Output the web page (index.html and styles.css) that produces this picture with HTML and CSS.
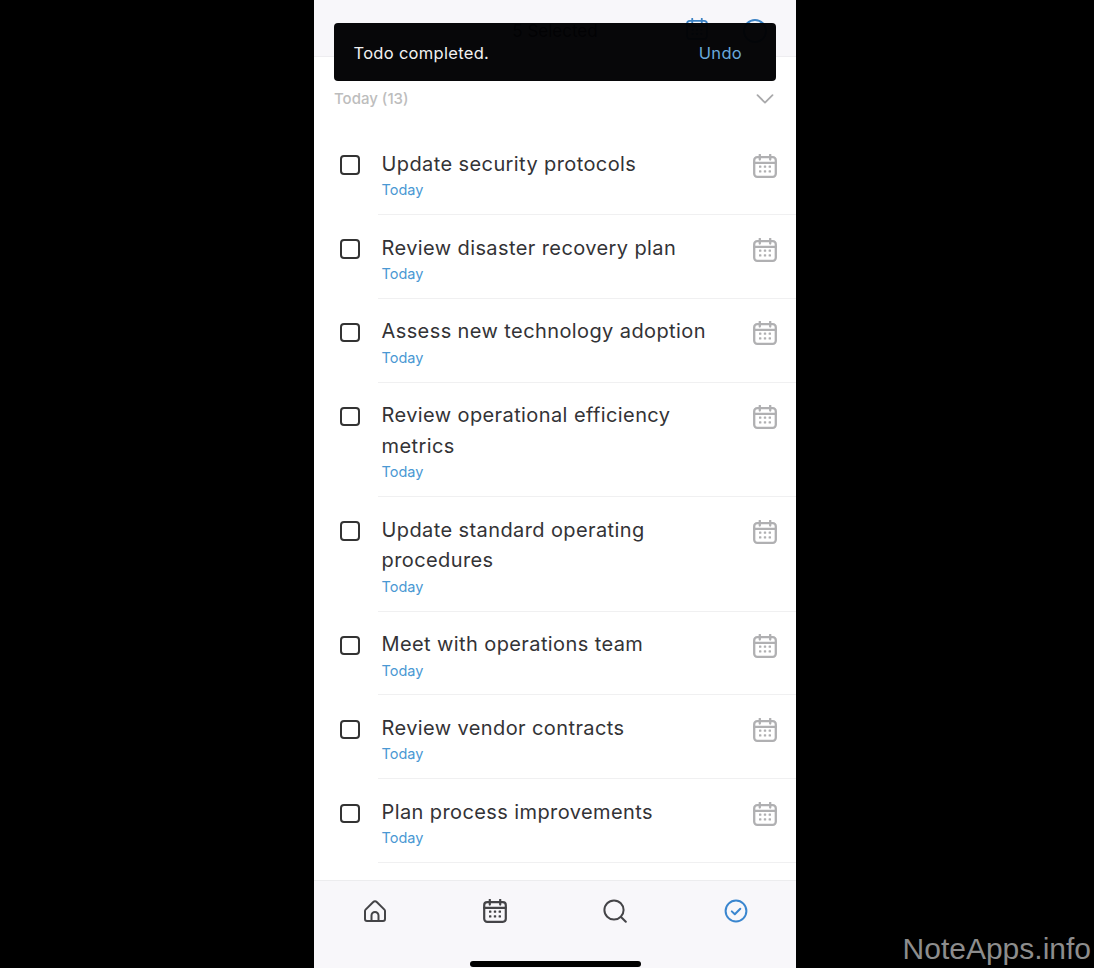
FILE: index.html
```html
<!DOCTYPE html>
<html lang="en">
<head>
  <meta charset="UTF-8" />
  <meta name="viewport" content="width=device-width, initial-scale=1.0" />
  <title>Todos</title>
  <link rel="stylesheet" href="styles.css">
</head>
<body>
  <svg class="icon-defs" width="0" height="0" aria-hidden="true">
    <symbol id="calendar" viewBox="0 0 24 24">
      <rect x="1.2" y="3.2" width="21.6" height="19.6" rx="3" fill="none" stroke="currentColor" />
      <path d="M1.2 8.800h21.600M6.800 0.800v4.800M17.200 0.800v4.800" fill="none" stroke="currentColor" stroke-linecap="round" />
      <g fill="currentColor">
        <rect x="6" y="11.400" width="2.400" height="2.400" rx=".5" />
        <rect x="10.800" y="11.400" width="2.400" height="2.400" rx=".5" />
        <rect x="15.600" y="11.400" width="2.400" height="2.400" rx=".5" />
        <rect x="6" y="16.200" width="2.400" height="2.400" rx=".5" />
        <rect x="10.800" y="16.200" width="2.400" height="2.400" rx=".5" />
        <rect x="15.600" y="16.200" width="2.400" height="2.400" rx=".5" />
      </g>
    </symbol>
  </svg>

  <div class="phone" role="main">
    <header class="top-bar">
      <span class="top-title">5 Selected</span>
      <svg class="top-cal"><use href="#calendar" /></svg>
      <span class="top-circle"></span>
    </header>

    <div class="toast">
      <span>Todo completed.</span>
      <span class="toast-undo">Undo</span>
    </div>

    <div class="section-head">
      <span>Today (13)</span>
      <svg class="chevron" viewBox="0 0 18 10"><path d="M1.500 1.200 9 8.600l7.500-7.400" fill="none" stroke="currentColor" stroke-width="1.800" stroke-linecap="round" stroke-linejoin="round" /></svg>
    </div>

    <ul class="todo-list">
      <li class="todo">
        <span class="checkbox"></span>
        <div class="todo-body">
          <div class="todo-title">Update security protocols</div>
          <div class="todo-date">Today</div>
        </div>
        <svg class="todo-cal"><use href="#calendar" /></svg>
      </li>
      <li class="todo">
        <span class="checkbox"></span>
        <div class="todo-body">
          <div class="todo-title">Review disaster recovery plan</div>
          <div class="todo-date">Today</div>
        </div>
        <svg class="todo-cal"><use href="#calendar" /></svg>
      </li>
      <li class="todo">
        <span class="checkbox"></span>
        <div class="todo-body">
          <div class="todo-title">Assess new technology adoption</div>
          <div class="todo-date">Today</div>
        </div>
        <svg class="todo-cal"><use href="#calendar" /></svg>
      </li>
      <li class="todo">
        <span class="checkbox"></span>
        <div class="todo-body">
          <div class="todo-title">Review operational efficiency<br>metrics</div>
          <div class="todo-date">Today</div>
        </div>
        <svg class="todo-cal"><use href="#calendar" /></svg>
      </li>
      <li class="todo">
        <span class="checkbox"></span>
        <div class="todo-body">
          <div class="todo-title">Update standard operating<br>procedures</div>
          <div class="todo-date">Today</div>
        </div>
        <svg class="todo-cal"><use href="#calendar" /></svg>
      </li>
      <li class="todo">
        <span class="checkbox"></span>
        <div class="todo-body">
          <div class="todo-title">Meet with operations team</div>
          <div class="todo-date">Today</div>
        </div>
        <svg class="todo-cal"><use href="#calendar" /></svg>
      </li>
      <li class="todo">
        <span class="checkbox"></span>
        <div class="todo-body">
          <div class="todo-title">Review vendor contracts</div>
          <div class="todo-date">Today</div>
        </div>
        <svg class="todo-cal"><use href="#calendar" /></svg>
      </li>
      <li class="todo">
        <span class="checkbox"></span>
        <div class="todo-body">
          <div class="todo-title">Plan process improvements</div>
          <div class="todo-date">Today</div>
        </div>
        <svg class="todo-cal"><use href="#calendar" /></svg>
      </li>
    </ul>

    <nav class="tab-bar">
      <div class="tab">
        <svg class="tab-icon tab-home" viewBox="0 0 24 24"><path d="M2.600 10.600 10 3.200a2.900 2.900 0 0 1 4 0l7.400 7.400a2 2 0 0 1 .6 1.400v8a2 2 0 0 1-2 2H4a2 2 0 0 1-2-2v-8a2 2 0 0 1 .6-1.400Z M8.500 22v-5.500a3.500 3.500 0 0 1 7 0V22" fill="none" stroke="currentColor" stroke-width="2" stroke-linejoin="round" /></svg>
      </div>
      <div class="tab">
        <svg class="tab-icon tab-cal"><use href="#calendar" /></svg>
      </div>
      <div class="tab">
        <svg class="tab-icon" viewBox="0 0 24 24"><circle cx="11" cy="11" r="9.600" fill="none" stroke="currentColor" stroke-width="2" /><path d="m18 18 4.800 4.800" fill="none" stroke="currentColor" stroke-width="2" stroke-linecap="round" /></svg>
      </div>
      <div class="tab tab-active">
        <svg class="tab-icon" viewBox="0 0 24 24"><circle cx="12" cy="12" r="10.400" fill="none" stroke="currentColor" stroke-width="2" /><path d="m7.800 12.400 3 2.900 5.500-5.600" fill="none" stroke="currentColor" stroke-width="2" stroke-linecap="round" stroke-linejoin="round" /></svg>
      </div>
      <span class="home-bar"></span>
    </nav>
  </div>

  <div class="watermark">NoteApps.info</div>
</body>
</html>
```

FILE: styles.css
```css
html, body {
  height: 100%;
}

body {
  margin: 0;
  background-color: #000;
  font-family: 'Inter', 'Liberation Sans', sans-serif;
  overflow: hidden;
}

.icon-defs {
  position: absolute;
}

.phone {
  position: relative;
  width: 482px;
  height: 968px;
  margin-left: 314px;
  background-color: #fff;
  display: flex;
  flex-direction: column;
  overflow: hidden;
}

/* header, mostly hidden behind the toast */
.top-bar {
  position: relative;
  height: 56px;
  flex: none;
  background-color: #f8f7fa;
  border-bottom: 1px solid #eeedf0;
  display: flex;
  justify-content: center;
  align-items: flex-end;
}

.top-title {
  font-size: 17px;
  line-height: 50px;
  color: #000;
}

.top-cal {
  position: absolute;
  left: 372px;
  top: 18px;
  width: 22px;
  height: 22px;
  color: #3b82c4;
  stroke-width: 2;
}

.top-circle {
  position: absolute;
  left: 429px;
  top: 19px;
  width: 20px;
  height: 20px;
  border: 2px solid #3b82c4;
  border-radius: 50%;
}

.toast {
  position: absolute;
  left: 20px;
  top: 23px;
  width: 442px;
  height: 58px;
  box-sizing: border-box;
  padding: 1px 34px 0 19.500px;
  background-color: rgba(2, 2, 4, 0.98);
  border-radius: 4px;
  display: flex;
  justify-content: space-between;
  align-items: center;
  font-size: 16.500px;
  letter-spacing: 0.3px;
  color: #f2f2f2;
}

.toast-undo {
  color: #6aa9dc;
}

.section-head {
  flex: none;
  height: 74px;
  box-sizing: border-box;
  padding: 32px 22px 0 20px;
  display: flex;
  justify-content: space-between;
  align-items: flex-start;
  font-size: 15px;
  line-height: 20px;
  font-weight: 500;
  color: #bdbdbd;
}

.chevron {
  width: 18px;
  height: 10px;
  margin-top: 5px;
  color: #a9a9ab;
}

.todo-list {
  list-style: none;
  margin: 0;
  padding: 0;
  flex: 1;
}

.todo {
  display: flex;
  align-items: flex-start;
  padding-top: 17.700px;
}

.checkbox {
  flex: none;
  width: 15.500px;
  height: 15.500px;
  margin: 6.500px 18px 0 26px;
  border: 2px solid #333;
  border-radius: 4px;
}

.todo-body {
  flex: 1;
  padding: 0 43px 13.800px 4px;
  margin-right: -43px;
  border-bottom: 1px solid #f0f0f1;
}

.todo-title {
  font-size: 20px;
  line-height: 30.700px;
  letter-spacing: 0.4px;
  color: #333336;
}

.todo-date {
  margin-top: 0.500px;
  font-size: 14.500px;
  line-height: 20.150px;
  color: #4a98d3;
}

.todo-cal {
  flex: none;
  position: relative;
  width: 24px;
  height: 24px;
  margin: 5px 19px 0 0;
  color: #b0b0b2;
  stroke-width: 2.300;
}

.tab-bar {
  position: relative;
  flex: none;
  height: 88px;
  background-color: #f8f7fa;
  border-top: 1px solid #ececee;
  display: grid;
  grid-template-columns: repeat(4, 120.500px);
  justify-items: center;
  padding-top: 18px;
  box-sizing: border-box;
  color: #444447;
}

.tab-icon {
  display: block;
  width: 24px;
  height: 24px;
}

.tab-home {
  margin-left: 1px;
}

.tab-cal {
  stroke-width: 2.200;
}

.tab-active {
  color: #3a86cf;
}

.home-bar {
  position: absolute;
  left: 156px;
  top: 80px;
  width: 171px;
  height: 6px;
  background-color: #000;
  border-radius: 3px;
}

.watermark {
  position: absolute;
  right: 3px;
  bottom: 2px;
  font-family: 'Liberation Sans', sans-serif;
  font-size: 30px;
  color: #8d8d8d;
}
```
